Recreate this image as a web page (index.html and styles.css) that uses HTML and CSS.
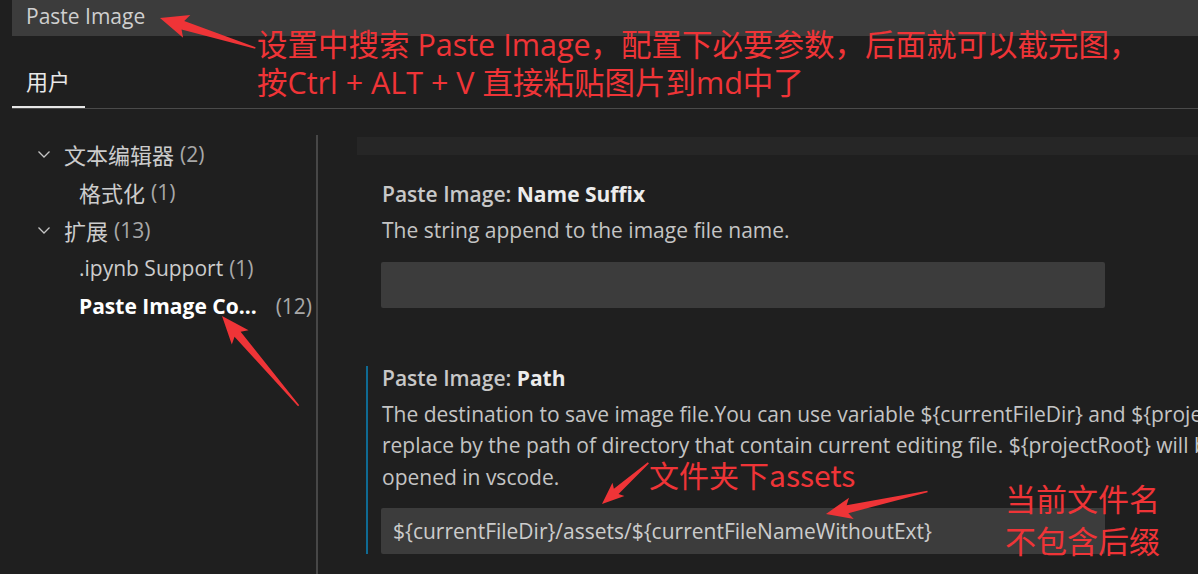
FILE: index.html
```html
<!DOCTYPE html>
<html lang="zh-CN">
<head>
<meta charset="utf-8">
<title>Settings - Paste Image</title>
<link rel="stylesheet" href="styles.css">
</head>
<body>
<div class="page">
  <div class="search">Paste Image</div>
  <div class="tabs"><div class="tab active"><span class="cjk">用户</span></div></div>
  <div class="main">
    <nav class="tree">
      <div class="row l1">
        <svg class="chev" viewBox="0 0 16 16"><path d="M2.5 5.5 L8 11 L13.5 5.5" fill="none" stroke="#c5c5c5" stroke-width="1.3"/></svg>
        <span class="cjk">文本编辑器</span><span class="count">(2)</span>
      </div>
      <div class="row l2"><span class="cjk">格式化</span><span class="count">(1)</span></div>
      <div class="row l1">
        <svg class="chev" viewBox="0 0 16 16"><path d="M2.5 5.5 L8 11 L13.5 5.5" fill="none" stroke="#c5c5c5" stroke-width="1.3"/></svg>
        <span class="cjk">扩展</span><span class="count">(13)</span>
      </div>
      <div class="row l2"><span>.ipynb Support</span><span class="count">(1)</span></div>
      <div class="row l2 active"><span class="name">Paste Image Co...</span><span class="count">(12)</span></div>
    </nav>
    <section class="panel">
      <div class="band"></div>
      <div class="setting first">
        <div class="title">Paste Image: <b>Name Suffix</b></div>
        <div class="desc">The string append to the image file name.</div>
        <div class="input"></div>
      </div>
      <div class="setting focused">
        <div class="title">Paste Image: <b>Path</b></div>
        <div class="desc">The destination to save image file.You can use variable ${currentFileDir} and ${projectRoot}. ${currentFileDir} will be<br>replace by the path of directory that contain current editing file. ${projectRoot} will be replace by path of the project<br>opened in vscode.</div>
        <div class="input">${currentFileDir}/assets/${currentFileNameWithoutExt}</div>
      </div>
    </section>
  </div>

  <div class="note note-top">设置中搜索 Paste Image，配置下必要参数，后面就可以截完图，<br>按Ctrl + ALT + V 直接粘贴图片到md中了</div>
  <div class="note note-assets">文件夹下assets</div>
  <div class="note note-name">当前文件名<br>不包含后缀</div>

  <svg class="arrows" width="1198" height="574" viewBox="0 0 1198 574">
    <g fill="#ef3437">
      <g transform="translate(160,18) rotate(17.5)"><polygon points="0,0 28,-12 24,-4.5 100,-0.8 100,0.8 24,4.5 28,12"/></g>
      <g transform="translate(222,316) rotate(49.5)"><polygon points="0,0 28,-11 24,-4 118,-0.8 118,0.8 24,4 28,11"/></g>
      <g transform="translate(602,504) rotate(-41.6)"><polygon points="0,0 22,-9 19,-3.5 62,-0.8 62,0.8 19,3.5 22,9"/></g>
      <g transform="translate(826,514) rotate(-12.5)"><polygon points="0,0 26,-11 22,-4 104,-0.8 104,0.8 22,4 26,11"/></g>
    </g>
  </svg>
</div>
</body>
</html>
```
FILE: styles.css
```css
* { box-sizing: border-box; }
html, body { margin: 0; padding: 0; }
body {
  background: #1f1f1f;
  color: #cccccc;
  font-family: "Open Sans", "Noto Sans CJK SC", sans-serif;
  font-size: 21px;
  width: 1198px;
  height: 574px;
  overflow: hidden;
}
.page { position: relative; width: 1198px; height: 574px; overflow: hidden; }
.cjk { font-family: "Noto Sans CJK SC", "Open Sans", sans-serif; font-size: 22px; }

.search {
  margin-left: 12px;
  height: 36px;
  background: #3c3c3c;
  color: #cfcfcf;
  padding-left: 14px;
  line-height: 33px;
  font-size: 21px;
}

.tabs {
  margin-left: 12px;
  height: 73px;
  border-bottom: 1px solid #4a4a4a;
  display: flex;
  align-items: flex-end;
}
.tab {
  width: 73px;
  padding-left: 14px;
  height: 48px;
  line-height: 40px;
  color: #e8e8e8;
}
.tab.active { border-bottom: 2px solid #e6e6e6; }

.main {
  display: flex;
  margin-top: 26px;
  height: 439px;
}
.tree { width: 316px; flex: none; }
.row {
  height: 38px;
  display: flex;
  align-items: center;
  white-space: nowrap;
  color: #cccccc;
}
.row.l1 { padding-left: 36px; }
.row.l2 { padding-left: 79px; }
.chev { width: 16px; height: 16px; margin-right: 12px; }
.count { color: #a8a8a8; margin-left: 6px; }
.row.active .name { color: #ffffff; font-weight: 700; }
.row.active .count { margin-left: 19px; }

.panel {
  flex: 1;
  border-left: 2px solid #474747;
  padding-left: 39px;
  padding-top: 2px;
  white-space: nowrap;
  overflow: hidden;
}
.band { height: 18px; background: #262626; }

.setting {
  margin-left: 9px;
  border-left: 2px solid transparent;
  padding-left: 14px;
}
.setting.first { margin-top: 27px; }
.setting.focused { margin-top: 58px; border-left-color: #0f6a93; }
.title { line-height: 24px; font-weight: 600; color: #c8c8c8; }
.title b { color: #ececec; font-weight: 700; }
.desc { margin-top: 9px; line-height: 31.5px; color: #c4c4c4; }
.input {
  margin-top: 15px;
  width: 724px;
  margin-left: -1px;
  height: 46px;
  background: #3c3c3c;
  border-radius: 2px;
  padding-left: 12px;
  line-height: 46px;
  color: #cccccc;
}

.note {
  position: absolute;
  color: #ef3437;
  font-family: "Open Sans", "Noto Sans CJK SC", sans-serif;
  white-space: nowrap;
}
.note-top { left: 257px; top: 25px; font-size: 30.5px; line-height: 38px; }
.note-assets { left: 649px; top: 454px; font-size: 30px; line-height: 40px; font-family: "Noto Sans CJK SC", sans-serif; }
.note-name { left: 1005px; top: 477px; font-size: 31px; line-height: 42px; font-family: "Noto Sans CJK SC", sans-serif; }

.arrows { position: absolute; left: 0; top: 0; pointer-events: none; }
```
